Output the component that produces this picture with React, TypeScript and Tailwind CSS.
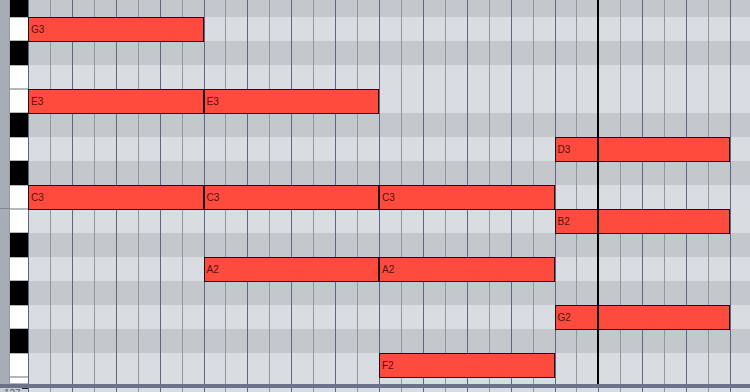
import React from "react";

// piano roll: rows top → bottom, first row is cut by scroll (17px), last one too (7px)
const ROWS = [
  { name: "G#3", black: true, h: "h-[17px]" },
  { name: "G3", black: false, h: "h-[24px]" },
  { name: "F#3", black: true, h: "h-[24px]" },
  { name: "F3", black: false, h: "h-[24px]" },
  { name: "E3", black: false, h: "h-[24px]" },
  { name: "D#3", black: true, h: "h-[24px]" },
  { name: "D3", black: false, h: "h-[24px]" },
  { name: "C#3", black: true, h: "h-[24px]" },
  { name: "C3", black: false, h: "h-[24px]" },
  { name: "B2", black: false, h: "h-[24px]" },
  { name: "A#2", black: true, h: "h-[24px]" },
  { name: "A2", black: false, h: "h-[24px]" },
  { name: "G#2", black: true, h: "h-[24px]" },
  { name: "G2", black: false, h: "h-[24px]" },
  { name: "F#2", black: true, h: "h-[24px]" },
  { name: "F2", black: false, h: "h-[24px]" },
  { name: "E2", black: false, h: "h-[7px]" },
];

const ROW_START = [
  "row-start-1", "row-start-2", "row-start-3", "row-start-4", "row-start-5", "row-start-6",
  "row-start-7", "row-start-8", "row-start-9", "row-start-10", "row-start-11", "row-start-12",
  "row-start-13", "row-start-14", "row-start-15", "row-start-16", "row-start-17",
];

const COL_START = [
  "col-start-1", "col-start-2", "col-start-3", "col-start-4", "col-start-5", "col-start-6",
  "col-start-7", "col-start-8", "col-start-9", "col-start-10", "col-start-11", "col-start-12",
  "col-start-13", "col-start-14", "col-start-15", "col-start-16", "col-start-17", "col-start-18",
  "col-start-19", "col-start-20", "col-start-21", "col-start-22", "col-start-23", "col-start-24",
  "col-start-25", "col-start-26", "col-start-27", "col-start-28", "col-start-29", "col-start-30",
  "col-start-31", "col-start-32", "col-start-33",
];

// row index (0-based into ROWS), start step (0-based), all notes are 8 steps long
const NOTES = [
  { label: "G3", row: 1, step: 0 },
  { label: "E3", row: 4, step: 0 },
  { label: "E3", row: 4, step: 8 },
  { label: "D3", row: 6, step: 24 },
  { label: "C3", row: 8, step: 0 },
  { label: "C3", row: 8, step: 8 },
  { label: "C3", row: 8, step: 16 },
  { label: "B2", row: 9, step: 24 },
  { label: "A2", row: 11, step: 8 },
  { label: "A2", row: 11, step: 16 },
  { label: "G2", row: 13, step: 24 },
  { label: "F2", row: 15, step: 16 },
];

const PLAYHEAD_STEP = 26;

function ColumnLines() {
  return (
    <>
      {COL_START.map((cls, k) => (
        <div
          key={k}
          className={`${cls} row-span-full border-l ${k % 2 === 0 ? "border-[#5b6783]" : "border-[#8d97a6]"}`}
        />
      ))}
    </>
  );
}

function Keyboard() {
  return (
    <div className="flex w-[28px] shrink-0 flex-col">
      {ROWS.map((r) => (
        <div key={r.name} className={`flex ${r.h}`}>
          <div
            className={`w-[10px] border-r border-[#959ba2] bg-[#a7adb4] ${r.name === "C3" ? "border-b border-b-[#7f858d]" : ""}`}
          />
          <div
            className={`w-[18px] ${r.black ? "bg-black" : "border-y border-[#b4b6b9] bg-white"}`}
          />
        </div>
      ))}
    </div>
  );
}

export default function App() {
  return (
    <div className="flex h-[392px] w-[750px] flex-col overflow-hidden bg-[#d9dce1] font-['Liberation_Sans',Arial,sans-serif]">
      <div className="flex h-[384px]">
        <Keyboard />

        <div className="grid flex-1 grid-cols-[repeat(32,21.9375px)_1fr] grid-rows-[17px_repeat(15,24px)_7px]">
          {ROWS.map((r, i) => (
            <div
              key={r.name}
              className={`${ROW_START[i]} col-span-full ${r.black ? "bg-[#c4c7cc]" : "bg-[#d9dce1]"}`}
            />
          ))}

          <ColumnLines />

          {NOTES.map((n, i) => (
            <div
              key={i}
              className={`${ROW_START[n.row]} ${COL_START[n.step]} relative z-10 col-span-8 flex h-[25px] items-center self-start border border-[#141414] bg-[#ff4a3e] pl-[2px] text-[10px] leading-none text-[#4a1713]`}
            >
              {n.label}
            </div>
          ))}

          <div className={`${COL_START[PLAYHEAD_STEP]} relative z-20 row-span-full ml-[-1px] border-l-2 border-black`} />
        </div>
      </div>

      <div className="h-[4px] shrink-0 bg-[#6a738a]" />

      <div className="flex h-[4px] shrink-0">
        <div className="relative flex w-[28px] shrink-0 items-start overflow-hidden bg-[#c9ccd1]">
          <span className="pl-[4px] pt-[1px] text-[10px] leading-[10px] text-[#5a5f66]">127</span>
          <div className="ml-auto w-[6px] border-t border-[#222]" />
        </div>
        <div className="grid flex-1 grid-cols-[repeat(32,21.9375px)_1fr] bg-[#d9dce1]">
          <ColumnLines />
        </div>
      </div>
    </div>
  );
}
